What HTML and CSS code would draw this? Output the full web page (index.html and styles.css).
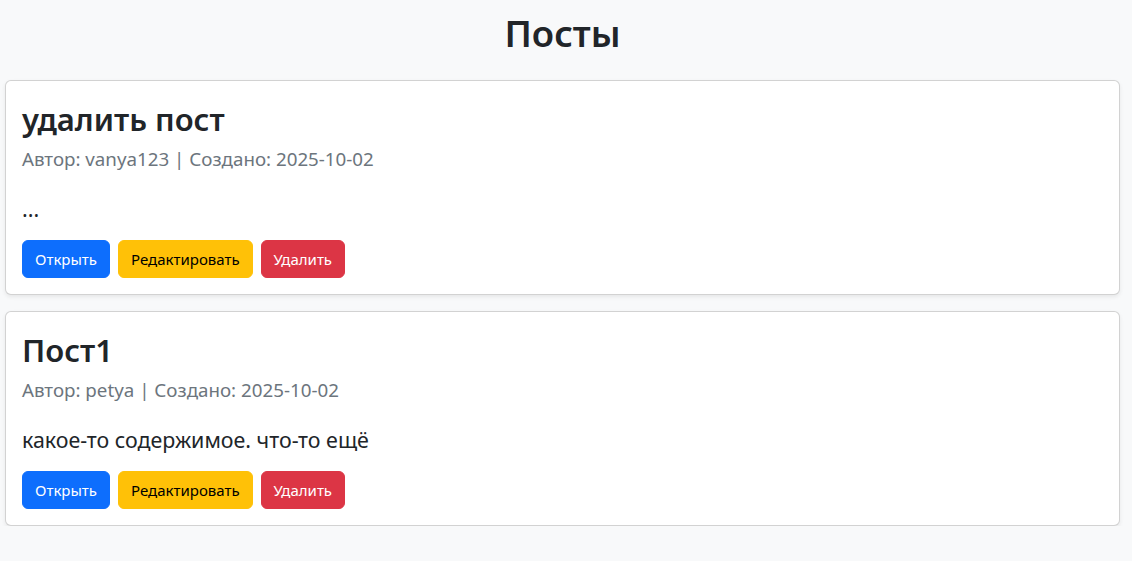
FILE: index.html
```html
<!DOCTYPE html>
<html lang="ru">
<head>
<meta charset="utf-8">
<title>Посты</title>
<link rel="stylesheet" href="styles.css">
</head>
<body>
<div class="page">
  <h1 class="page-title">Посты</h1>
  <div class="posts">
    <div class="card">
      <h2 class="card-title">удалить пост</h2>
      <p class="card-meta">Автор: vanya123 | Создано: 2025-10-02</p>
      <p class="card-text">...</p>
      <div class="actions">
        <button class="btn btn-primary">Открыть</button>
        <button class="btn btn-warning">Редактировать</button>
        <button class="btn btn-danger">Удалить</button>
      </div>
    </div>
    <div class="card">
      <h2 class="card-title">Пост1</h2>
      <p class="card-meta">Автор: petya | Создано: 2025-10-02</p>
      <p class="card-text">какое-то содержимое. что-то ещё</p>
      <div class="actions">
        <button class="btn btn-primary">Открыть</button>
        <button class="btn btn-warning">Редактировать</button>
        <button class="btn btn-danger">Удалить</button>
      </div>
    </div>
  </div>
</div>
</body>
</html>
```

FILE: styles.css
```css
* { box-sizing: border-box; }
html, body { margin: 0; padding: 0; }
body {
  background: #f8f9fa;
  color: #212529;
  font-family: "Noto Sans", "Open Sans", sans-serif;
}
.page {
  padding: 10px 12px 0 5px;
}
.page-title {
  margin: 0 0 24px;
  text-align: center;
  font-size: 36.5px;
  line-height: 46px;
  font-weight: 600;
}
.posts {
  display: flex;
  flex-direction: column;
  gap: 16px;
}
.card {
  background: #fff;
  border: 1px solid rgba(0, 0, 0, 0.175);
  border-radius: 6px;
  box-shadow: 0 2px 4px rgba(0, 0, 0, 0.075);
  padding: 16px;
  display: flex;
  flex-direction: column;
}
.card-title {
  margin: 0 0 4px;
  font-size: 31px;
  line-height: 44px;
  font-weight: 600;
}
.card-meta {
  margin: 0 0 21px;
  font-size: 18.75px;
  line-height: 28px;
  color: #6c757d;
}
.card-text {
  margin: 0 0 16px;
  font-size: 21.4px;
  line-height: 30px;
}
.actions {
  display: flex;
  gap: 8px;
}
.btn {
  font-family: inherit;
  font-size: 15px;
  line-height: 22px;
  padding: 7px 12px;
  border: 1px solid transparent;
  border-radius: 6px;
  cursor: pointer;
}
.btn-primary { background: #0d6efd; border-color: #0d6efd; color: #fff; }
.btn-warning { background: #ffc107; border-color: #ffc107; color: #000; }
.btn-danger { background: #dc3545; border-color: #dc3545; color: #fff; }
```
